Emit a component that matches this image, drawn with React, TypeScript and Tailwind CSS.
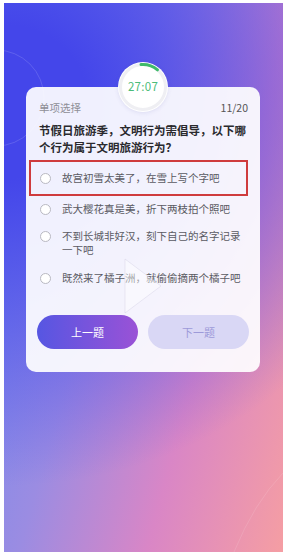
const options = [
  { text: "故宫初雪太美了，在雪上写个字吧" },
  { text: "武大樱花真是美，折下两枝拍个照吧" },
  { text: "不到长城非好汉，刻下自己的名字记录", more: "一下吧" },
  { text: "既然来了橘子洲，就偷偷摘两个橘子吧" },
]

const Radio = () => (
  <span className="mt-[1.5px] block w-[11px] h-[11px] shrink-0 rounded-full border border-[#b9b9c2] bg-white" />
)

const Timer = () => (
  <div className="absolute left-1/2 -translate-x-1/2 -top-[25px] w-[50px] h-[50px] rounded-full bg-white shadow-[0_1px_4px_rgba(80,80,160,0.12)] flex items-center justify-center">
    <svg width="50" height="50" viewBox="0 0 50 50" className="absolute inset-0">
      <circle cx="25" cy="25" r="22.5" fill="none" stroke="#efeff3" strokeWidth="3" />
      <path d="M 23 2.6 A 22.5 22.5 0 0 1 39.5 7.8" fill="none" stroke="#3fba6a" strokeWidth="3" strokeLinecap="round" />
    </svg>
    <span className="relative text-[11.5px] text-[#4cbc79] tracking-[0.3px]">27:07</span>
  </div>
)

export default function App() {
  return (
    <div className="w-[289px] h-[559px] bg-white pl-[4px] pt-[3px] font-['Noto_Sans_CJK_SC','Noto_Sans',sans-serif]">
      <div className="relative w-[279px] h-[549px] overflow-hidden bg-[radial-gradient(150%_70%_at_0%_18%,#4446ea_20%,rgba(70,72,234,0)_100%),linear-gradient(105deg,#6a8af1_0%,#9b8ce2_38%,#d986c6_68%,#f59ea3_100%)] pt-[84px]">
        {/* faint decorative arcs */}
        <svg width="279" height="549" className="absolute inset-0 pointer-events-none">
          <circle cx="-8" cy="95" r="48" fill="none" stroke="white" strokeOpacity="0.14" strokeWidth="1" />
          <path d="M 230 549 Q 250 500 279 470" fill="none" stroke="white" strokeOpacity="0.12" strokeWidth="1" />
        </svg>

        <div className="relative ml-[22px] w-[234px] rounded-[10px] bg-white/92 pt-[14px] pb-[23px]">
          <Timer />

          <div className="flex justify-between px-[13px] pr-[12px] text-[10.5px] leading-[14px] text-[#8e8e96]">
            <span>单项选择</span>
            <span className="text-[#555]">11/20</span>
          </div>

          <p className="mt-[7px] px-[13px] text-[11.5px] leading-[17px] font-bold text-[#2a2a2e]">
            节假日旅游季，文明行为需倡导，以下哪
            <br />
            个行为属于文明旅游行为？
          </p>

          <div className="mt-[4px] ml-[3px] mr-[12px] text-[10.5px] leading-[14px] text-[#5a5a62]">
            <div className="h-[36px] border-2 border-[#cf3b3d] pl-[9px] flex items-center gap-[11px]">
              <Radio />
              <span>{options[0].text}</span>
            </div>
            <div className="mt-[6px] pl-[11px] flex items-start gap-[11px]">
              <Radio />
              <span>{options[1].text}</span>
            </div>
            <div className="mt-[13px] pl-[11px] flex items-start gap-[11px]">
              <Radio />
              <span>
                {options[2].text}
                <br />
                {options[2].more}
              </span>
            </div>
            <div className="mt-[14px] pl-[11px] flex items-start gap-[11px]">
              <Radio />
              <span>{options[3].text}</span>
            </div>
          </div>

          <div className="mt-[30px] flex justify-center gap-[10px]">
            <button className="w-[101px] h-[34px] rounded-full bg-[linear-gradient(90deg,#5656e2,#9a52d6)] text-white text-[11px]">
              上一题
            </button>
            <button className="w-[101px] h-[34px] rounded-full bg-[#d9d7f5] text-[#9d9ad9] text-[11px]">
              下一题
            </button>
          </div>

          {/* faint play overlay */}
          <svg width="45" height="60" className="absolute left-[97px] top-[170px] pointer-events-none">
            <path d="M 2 2 L 2 56 L 38 29 Z" fill="white" fillOpacity="0.45" stroke="#c9c6dc" strokeOpacity="0.35" strokeWidth="1" />
          </svg>
        </div>
      </div>
    </div>
  )
}
